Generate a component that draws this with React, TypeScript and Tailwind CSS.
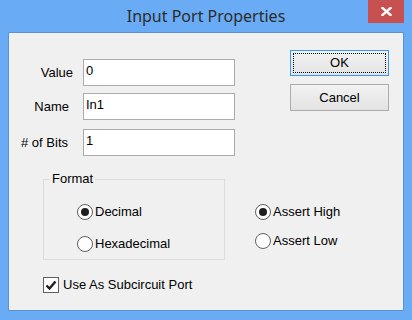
import React from "react";

const font = { fontFamily: '"Liberation Sans", Arial, sans-serif' };

function Radio({ checked, label }: { checked?: boolean; label: string }) {
  return (
    <div className="flex items-center h-[16px]">
      <span className="w-[16px] h-[16px] rounded-full border border-[#5f5f5f] bg-white flex items-center justify-center shrink-0">
        {checked && <span className="w-[8px] h-[8px] rounded-full bg-[#1f1f1f]" />}
      </span>
      <span className="ml-[2px] text-[13px] leading-[16px] text-black">{label}</span>
    </div>
  );
}

function Field({ label, value, pr, mt }: { label: string; value: string; pr: string; mt: string }) {
  return (
    <div className={`flex items-center ${mt}`}>
      <div className={`w-[74px] text-right text-[13px] leading-[16px] text-black ${pr}`}>{label}</div>
      <div className="w-[152px] h-[27px] border border-[#ababab] bg-white px-[2px] pt-[3px] text-[13px] leading-[16px] text-black">
        {value}
      </div>
    </div>
  );
}

export default function App() {
  return (
    <div className="w-[412px] h-[320px] bg-[#6aabf5] flex flex-col" style={font}>
      {/* Title bar */}
      <div className="h-[32px] relative flex items-center justify-center">
        <span
          className="text-[16px] text-[#2b2b2b] pb-[1px]"
          style={{ fontFamily: '"Noto Sans", "Open Sans", sans-serif' }}
        >
          Input Port Properties
        </span>
        <div className="absolute top-0 right-[8px] w-[36px] h-[23px] bg-[#c75050] flex items-center justify-center">
          <svg width="11" height="9" viewBox="0 0 11 9">
            <path d="M1.5 1 L9.5 8 M9.5 1 L1.5 8" stroke="white" strokeWidth="2.4" strokeLinecap="square" />
          </svg>
        </div>
      </div>

      {/* Client area */}
      <div className="mx-[8px] h-[279px] border border-[#5b92d2] bg-[#f0f0f0] flex flex-col">
        <div className="flex">
          <div className="flex flex-col pt-[26px]">
            <Field label="Value" value="0" pr="pr-[10px]" mt="" />
            <Field label="Name" value="In1" pr="pr-[14px]" mt="mt-[7px]" />
            <Field label="# of Bits" value="1" pr="pr-[15px]" mt="mt-[9px]" />
          </div>
          <div className="ml-auto pr-[14px] pt-[17px] flex flex-col gap-[8px]">
            <div className="w-[99px] h-[26px] border border-[#3399ff] bg-gradient-to-b from-[#f2f2f2] to-[#e3e3e3] p-[2px]">
              <div className="w-full h-full border border-dotted border-black flex items-center justify-center text-[13px] text-black">
                OK
              </div>
            </div>
            <div className="w-[99px] h-[27px] border border-[#acacac] bg-gradient-to-b from-[#f2f2f2] to-[#e3e3e3] flex items-center justify-center text-[13px] text-black">
              Cancel
            </div>
          </div>
        </div>

        <div className="flex items-start mt-[15px]">
          <fieldset className="ml-[34px] w-[182px] border border-[#dcdcdc] pb-[7px]">
            <legend className="ml-[6px] px-[2px] text-[13px] leading-[16px] text-black">Format</legend>
            <div className="pl-[33px] pt-[17px] flex flex-col gap-[16px]">
              <Radio checked label="Decimal" />
              <Radio label="Hexadecimal" />
            </div>
          </fieldset>
          <div className="ml-[30px] pt-[33px] flex flex-col gap-[13px]">
            <Radio checked label="Assert High" />
            <Radio label="Assert Low" />
          </div>
        </div>

        <div className="flex items-center ml-[34px] mt-[17px]">
          <span className="w-[16px] h-[16px] border border-[#5f5f5f] bg-white flex items-center justify-center">
            <svg width="12" height="11" viewBox="0 0 12 11">
              <path d="M1.5 5.5 L4.5 8.5 L10.5 1.5" fill="none" stroke="#1f1f1f" strokeWidth="2.4" />
            </svg>
          </span>
          <span className="ml-[4px] text-[13px] leading-[16px] text-black">Use As Subcircuit Port</span>
        </div>
      </div>
    </div>
  );
}
